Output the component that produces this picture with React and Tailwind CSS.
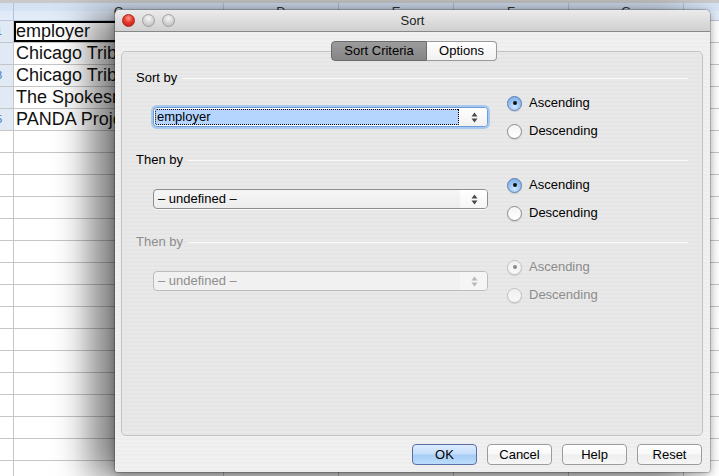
import { useState } from "react";

const colClasses = [
  "w-[14px]",
  "w-[210px]",
  "w-[115px]",
  "w-[115px]",
  "w-[115px]",
  "w-[115px]",
  "w-[115px]",
];
const letters = ["", "C", "D", "E", "F", "G", "H"];
const cellValues = [
  "employer",
  "Chicago Tribune",
  "Chicago Tribune",
  "The Spokesman-Review",
  "PANDA Project",
];

function Sheet() {
  const rows = Array.from({ length: 21 }, (_, i) => i);
  return (
    <div className="flex flex-col font-['Liberation_Sans',Arial,sans-serif]">
      <div className="h-[3px] bg-[#c9c9c9]" />
      {/* column header */}
      <div className="flex h-[18px] bg-[linear-gradient(#d3e1f4_0%,#d6e3f5_45%,#dfe9f7_50%,#e3ecf8_100%)] border-b border-[#b9c6d8]">
        {colClasses.map((w, i) => (
          <div
            key={i}
            className={`${w} shrink-0 border-r border-[#b4c2d6] flex items-center justify-center text-[13px] text-[#333]`}
          >
            {letters[i]}
          </div>
        ))}
      </div>
      {rows.map((r) => (
        <div key={r} className="flex h-[22px]">
          {colClasses.map((w, i) => {
            if (i === 0) {
              return (
                <div
                  key={i}
                  className={`${w} shrink-0 overflow-hidden border-r border-b border-[#c6c6c6] flex items-center justify-end pr-[11px] text-[11px] text-[#3b73c4] ${
                    r < 5 ? "bg-[#e1e9f5]" : "bg-white"
                  }`}
                >
                  {r < 5 && r % 2 === 0 ? r + 1 : ""}
                </div>
              );
            }
            const selected = r === 0 && i === 1;
            return (
              <div
                key={i}
                className={`${w} shrink-0 overflow-hidden whitespace-nowrap border-r border-b border-[#c6c6c6] bg-white pl-[2px] text-[18px] leading-[21px] text-[#111] ${
                  selected ? "shadow-[inset_0_0_0_2px_#000]" : ""
                }`}
              >
                {i === 1 && r < 5 ? cellValues[r] : ""}
              </div>
            );
          })}
        </div>
      ))}
    </div>
  );
}

function Arrows({ disabled }) {
  const c = disabled ? "#b9b9b9" : "#4a4a4a";
  return (
    <svg width="7" height="11" viewBox="0 0 7 11">
      <path d="M3.5 0.5 L6.5 4.5 L0.5 4.5 Z" fill={c} />
      <path d="M0.5 6.5 L6.5 6.5 L3.5 10.5 Z" fill={c} />
    </svg>
  );
}

function PopUp({ value, focused, disabled }) {
  if (focused) {
    return (
      <div className="w-[335px] h-[20px] rounded-[4px] border border-[#6d9bd6] shadow-[0_0_0_2px_#a7c8f0] flex bg-white">
        <div className="flex-1 p-[1px]">
          <div className="h-full bg-[#b5d5ff] border border-dotted border-black flex items-center pl-[1px] text-[13px] text-black rounded-l-[2px]">
            {value}
          </div>
        </div>
        <div className="w-[27px] flex items-center justify-center pl-[2px] bg-[linear-gradient(#ffffff,#f1f1f1)] rounded-r-[3px]">
          <Arrows />
        </div>
      </div>
    );
  }
  return (
    <div
      className={`w-[335px] h-[20px] rounded-[4px] border flex ${
        disabled
          ? "border-[#bcbcbc] bg-[#f1f1f1]"
          : "border-[#8c8c8c] bg-[linear-gradient(#f6f6f6,#ededed)] shadow-[0_1px_0_rgba(255,255,255,0.8)]"
      }`}
    >
      <div
        className={`flex-1 flex items-center pl-[4px] text-[13px] ${
          disabled ? "text-[#8e8e8e]" : "text-black"
        }`}
      >
        {value}
      </div>
      <div
        className={`w-[27px] flex items-center justify-center pl-[2px] rounded-r-[3px] ${
          disabled ? "bg-[#f5f5f5]" : "bg-[linear-gradient(#ffffff,#f6f6f6)]"
        }`}
      >
        <Arrows disabled={disabled} />
      </div>
    </div>
  );
}

function Radio({ label, checked, disabled }) {
  let circle = "border-[#8b8b8b] bg-[linear-gradient(#f4f4f4,#ffffff)]";
  if (checked && !disabled)
    circle =
      "border-[#5b7fb6] bg-[radial-gradient(circle_at_50%_75%,#cfe6ff_0%,#93bff0_55%,#7aa8e4_100%)]";
  if (disabled)
    circle = "border-[#c0c0c0] bg-[linear-gradient(#f0f0f0,#f8f8f8)]";
  return (
    <div className="h-[20px] flex items-center">
      <div
        className={`w-[15px] h-[15px] rounded-full border flex items-center justify-center shadow-[0_1px_1px_rgba(0,0,0,0.12)] ${circle}`}
      >
        {checked && (
          <div
            className={`w-[4px] h-[4px] rounded-full ${
              disabled ? "bg-[#8a8a8a]" : "bg-[#111]"
            }`}
          />
        )}
      </div>
      <span
        className={`ml-[7px] text-[13px] ${
          disabled ? "text-[#8c8c8c]" : "text-black"
        }`}
      >
        {label}
      </span>
    </div>
  );
}

function Section({ title, value, focused, disabled, first }) {
  return (
    <div className={first ? "" : "mt-[11px]"}>
      <div className="flex items-center h-[16px] gap-[5px]">
        <span
          className={`text-[13px] leading-[16px] ${
            disabled ? "text-[#8d8d8d]" : "text-black"
          }`}
        >
          {title}
        </span>
        <div className="flex-1 h-px bg-[#fbfbfb]" />
      </div>
      <div className="mt-[7px] flex items-center pl-[17px]">
        <PopUp value={value} focused={focused} disabled={disabled} />
        <div className="ml-[19px] flex flex-col gap-[8px]">
          <Radio label="Ascending" checked disabled={disabled} />
          <Radio label="Descending" disabled={disabled} />
        </div>
      </div>
    </div>
  );
}

function Button({ label, primary }) {
  return (
    <div
      className={`w-[65px] h-[21px] rounded-[4px] border flex items-center justify-center text-[13px] text-black ${
        primary
          ? "border-[#5b6ea6] bg-[linear-gradient(#dcecfd_0%,#c4defa_48%,#a6cdf6_52%,#bcdcfb_100%)]"
          : "border-[#9c9c9c] bg-[linear-gradient(#ffffff_0%,#f8f8f8_48%,#eeeeee_52%,#f6f6f6_100%)]"
      }`}
    >
      {label}
    </div>
  );
}

function TrafficLight({ red }) {
  return (
    <div
      className={`w-[13px] h-[13px] rounded-full border ${
        red
          ? "border-[#a8261f] bg-[radial-gradient(circle_at_50%_30%,#ff9c8f_0%,#e8392c_45%,#b71c12_100%)]"
          : "border-[#9f9f9f] bg-[radial-gradient(circle_at_50%_30%,#f6f6f6_0%,#d3d3d3_55%,#b4b4b4_100%)]"
      }`}
    />
  );
}

function SortDialog() {
  const [tab] = useState("criteria");
  return (
    <div className="absolute left-[115px] top-[10px] w-[595px] h-[462px] flex flex-col rounded-t-[5px] rounded-b-[3px] overflow-hidden bg-[repeating-linear-gradient(0deg,#ededed_0px,#ededed_2px,#f0f0f0_2px,#f0f0f0_4px)] shadow-[-25px_6px_35px_rgba(0,0,0,0.5),0_2px_10px_rgba(0,0,0,0.35),0_0_0_1px_rgba(0,0,0,0.18)] font-['Liberation_Sans',Arial,sans-serif]">
      {/* title bar */}
      <div className="h-[22px] shrink-0 flex items-center border-b border-[#888] bg-[linear-gradient(#ebebeb,#d0d0d0)]">
        <div className="w-[61px] flex items-center gap-[7px] pl-[7px]">
          <TrafficLight red />
          <TrafficLight />
          <TrafficLight />
        </div>
        <div className="flex-1 text-center text-[13px] text-[#222]">Sort</div>
        <div className="w-[61px]" />
      </div>

      <div className="flex-1 flex flex-col pl-[6px] pr-[7px] pt-[9px] pb-[7px]">
        {/* tabs */}
        <div className="relative z-10 -mb-[10px] flex justify-center h-[20px] pl-[4px]">
          <div
            className={`w-[96px] flex items-center justify-center text-[13px] text-black rounded-l-[4px] border ${
              tab === "criteria"
                ? "border-[#6c6c6c] bg-[linear-gradient(#9c9c9c,#858585)]"
                : ""
            }`}
          >
            Sort Criteria
          </div>
          <div className="w-[70px] flex items-center justify-center text-[13px] text-black rounded-r-[4px] border border-l-0 border-[#9a9a9a] bg-[linear-gradient(#ffffff,#f1f1f1)]">
            Options
          </div>
        </div>

        {/* group box */}
        <div className="flex-1 rounded-[5px] border border-[#c3c3c3] bg-[repeating-linear-gradient(0deg,#e5e5e5_0px,#e5e5e5_2px,#e9e9e9_2px,#e9e9e9_4px)] pt-[18px] px-[14px]">
          <Section title="Sort by" value="employer" focused first />
          <Section title="Then by" value="– undefined –" />
          <Section title="Then by" value="– undefined –" disabled />
        </div>

        {/* buttons */}
        <div className="mt-[8px] flex justify-end gap-[10px] pr-[1px]">
          <Button label="OK" primary />
          <Button label="Cancel" />
          <Button label="Help" />
          <Button label="Reset" />
        </div>
      </div>
    </div>
  );
}

export default function App() {
  return (
    <div className="relative w-[719px] h-[476px] overflow-hidden bg-white">
      <Sheet />
      <SortDialog />
    </div>
  );
}
